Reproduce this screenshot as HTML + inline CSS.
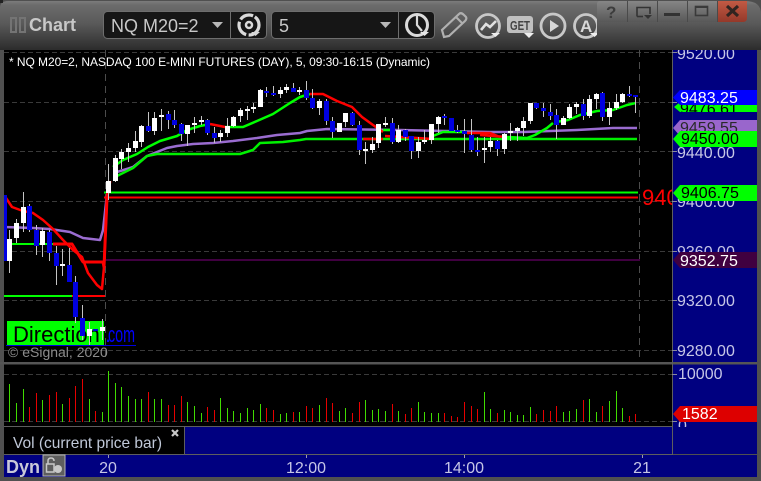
<!DOCTYPE html>
<html><head><meta charset="utf-8"><style>
html,body{margin:0;padding:0;background:#444;width:761px;height:481px;overflow:hidden}
svg{display:block}
text{font-family:"Liberation Sans",sans-serif}
.ax{font-size:16px;fill:#c6c6e6}
</style></head><body>
<svg width="761" height="481" viewBox="0 0 761 481" xmlns="http://www.w3.org/2000/svg">
<defs>
<linearGradient id="hd" x1="0" y1="0" x2="0" y2="1"><stop offset="0" stop-color="#7c7c7c"/><stop offset=".08" stop-color="#6c6c6c"/><stop offset=".45" stop-color="#5a5a5a"/><stop offset="1" stop-color="#2c2c2c"/></linearGradient>
<linearGradient id="bt" x1="0" y1="0" x2="0" y2="1"><stop offset="0" stop-color="#868686"/><stop offset="1" stop-color="#585858"/></linearGradient>
<linearGradient id="cl" x1="0" y1="0" x2="0" y2="1"><stop offset="0" stop-color="#c25a44"/><stop offset="1" stop-color="#94392a"/></linearGradient>
<clipPath id="tb"><rect x="0" y="0" width="597" height="50"/></clipPath>
<clipPath id="ch"><rect x="4" y="50" width="668" height="312"/></clipPath>
<clipPath id="redc"><rect x="640" y="180" width="32" height="40"/></clipPath>
<clipPath id="ra"><rect x="673" y="50" width="84" height="427"/></clipPath>
</defs>
<rect width="761" height="481" fill="#4e4e4e"/>
<path d="M0 481V8Q0 0 8 0H745Q761 0 761 14V481Z" fill="#505050"/>
<path d="M0 50V8Q0 1 8 1H745Q761 1 761 14V50Z" fill="url(#hd)"/>
<rect x="0" y="0" width="3" height="3" fill="#222"/>

<!-- title -->
<rect x="11" y="18" width="5" height="14" fill="none" stroke="#747474" stroke-width="2"/>
<rect x="20" y="18" width="5" height="14" fill="none" stroke="#747474" stroke-width="2"/>
<text x="29" y="31" font-size="18" font-weight="bold" fill="#c8c8c8">Chart</text>

<!-- pills -->
<rect x="103.500" y="11.500" width="163" height="27" rx="4" fill="#161616" stroke="#6e6e6e"/>
<path d="M230.500 12V38" stroke="#6e6e6e"/>
<text x="111" y="32" font-size="18" fill="#c8c8c8">NQ M20=2</text>
<path d="M212 22h11l-5.500 6z" fill="#b8b8b8"/>
<circle cx="249" cy="25" r="10" fill="none" stroke="#dadada" stroke-width="3.200" stroke-dasharray="16 2.500 16 2.500 14 2"/>
<circle cx="249" cy="25" r="3" fill="none" stroke="#dadada" stroke-width="2.500"/>
<path d="M251 32h9l-4.500 4z" fill="#d8d8d8"/>

<rect x="271.500" y="11.500" width="163" height="27" rx="4" fill="#161616" stroke="#6e6e6e"/>
<path d="M398.500 12V38" stroke="#6e6e6e"/>
<text x="279" y="32" font-size="18" fill="#c8c8c8">5</text>
<path d="M380 22h11l-5.500 6z" fill="#b8b8b8"/>
<circle cx="417" cy="25" r="10.500" fill="none" stroke="#dadada" stroke-width="3"/>
<path d="M417 16V25L422 31" fill="none" stroke="#dadada" stroke-width="2.200"/>
<path d="M420 32h9l-4.500 4z" fill="#e6e6e6"/>

<g clip-path="url(#tb)">
<!-- pencil -->
<path d="M444 37L442 30L459 14Q461 12 464 15L466 17Q467 19 465 21L449 36Z" fill="none" stroke="#b0b0b0" stroke-width="2.200"/>
<path d="M456 17L462 23" stroke="#b0b0b0" stroke-width="2"/>
<!-- line chart -->
<circle cx="488" cy="26" r="11.500" fill="none" stroke="#c8c8c8" stroke-width="2.800"/>
<path d="M481 30L486 24L490 27L496 21" fill="none" stroke="#e0e0e0" stroke-width="2.600"/>
<path d="M491 33h9l-4.500 4z" fill="#eee"/>
<!-- GET -->
<rect x="507" y="16" width="26" height="17" rx="3" fill="#c0c0c0"/>
<text x="510" y="30" font-size="13" font-weight="bold" fill="#444" textLength="20" lengthAdjust="spacingAndGlyphs">GET</text>
<path d="M524 33h10l-5 5z" fill="#eee"/>
<!-- play -->
<circle cx="553" cy="26" r="12" fill="none" stroke="#c8c8c8" stroke-width="2.800"/>
<path d="M550 20V32L559 26Z" fill="#d8d8d8"/>
<!-- A -->
<circle cx="586" cy="26" r="11.500" fill="none" stroke="#c8c8c8" stroke-width="2.800"/>
<text x="580" y="32" font-size="17" font-weight="bold" fill="#d8d8d8">A</text>
<path d="M590 33h9l-4.500 4z" fill="#eee"/>
</g>

<!-- window buttons -->
<path d="M597 4Q597 1 600 1H627V22H600Q597 22 597 19Z" fill="url(#bt)"/>
<rect x="627" y="1" width="30" height="21" fill="url(#bt)"/>
<rect x="657" y="1" width="30" height="21" fill="url(#bt)"/>
<rect x="687" y="1" width="30" height="21" fill="url(#bt)"/>
<path d="M717 1H747V18Q747 22 743 22H717Z" fill="url(#cl)"/>
<path d="M627.500 1V22M657.500 1V22M687.500 1V22M717.500 1V22" stroke="#4a4a4a"/>
<text x="606" y="18" font-size="17" font-weight="bold" fill="#3c3c3c">?</text>
<path d="M637 16.500V7.500H650V14" fill="none" stroke="#333" stroke-width="1.600"/><path d="M637 16.500H643" stroke="#333" stroke-width="1.600"/>
<path d="M644 15h8l-4 4z" fill="#333"/>
<rect x="664" y="13" width="16" height="3" fill="#333"/>
<rect x="695.500" y="6.500" width="12" height="9" fill="none" stroke="#3a3a3a" stroke-width="1.600"/><rect x="695" y="6" width="13" height="2" fill="#3a3a3a"/>
<path d="M727 6L738 16M738 6L727 16" stroke="#302420" stroke-width="3.200"/>

<!-- chart black area -->
<rect x="4" y="50" width="668" height="312" fill="#000"/>
<rect x="4" y="365" width="668" height="61" fill="#000"/>
<rect x="4" y="427" width="181" height="27" fill="#000"/>
<rect x="185" y="427" width="487" height="27" fill="#000080"/>
<rect x="4" y="455" width="753" height="22" fill="#000080"/>
<rect x="673" y="50" width="84" height="404" fill="#000080"/>
<rect x="4" y="362" width="668" height="3" fill="#000"/>
<rect x="0" y="362" width="757" height="2.500" fill="#555"/>
<path d="M672.500 50V454.500H4M4 426.500H672M184.500 427V454" stroke="#5e5e5e" fill="none"/>

<!-- grid -->
<path d="M4 52.500H678M4 102.500H672M4 151.500H672M4 201.500H672M4 251.500H672M4 300.500H672M4 350.500H672M4 374.500H672M4 421.500H672" stroke="#3a3a3a" stroke-dasharray="5 3" fill="none"/>
<path d="M105.500 50V362M639.500 50V362" stroke="#4c4c4c" stroke-dasharray="7 5" fill="none"/>
<path d="M672 52.500h5M672 102.500h5M672 151.500h5M672 201.500h5M672 251.500h5M672 300.500h5M672 350.500h5M672 374.500h5M672 421.500h5" stroke="#8a8a9a"/>

<text x="9" y="66" font-size="12" fill="#fff" textLength="421" lengthAdjust="spacing">* NQ M20=2, NASDAQ 100 E-MINI FUTURES (DAY), 5, 09:30-16:15 (Dynamic)</text>

<!-- Direction box -->
<rect x="7" y="321" width="97" height="24" fill="#00ff00"/>
<text x="13" y="342" font-size="22" fill="#000">Direction</text>
<text x="105" y="342" font-size="22" fill="#0000ff">.</text>
<text x="108" y="342" font-size="22" fill="#0000ff" textLength="27" lengthAdjust="spacingAndGlyphs">com</text>
<rect x="6" y="345" width="130" height="1" fill="#0000e0"/>
<text x="8" y="357" font-size="14" fill="#8c8c8c">© eSignal, 2020</text>

<g clip-path="url(#ch)" fill="none" stroke-linejoin="round">
<!-- horizontals -->
<path d="M104 192.500H638" stroke="#00ff00" stroke-width="2"/>
<path d="M104 197.500H638" stroke="#ff0000" stroke-width="2"/>
<path d="M104 260H640" stroke="#400040" stroke-width="2"/>
<path d="M4 296H72" stroke="#00ff00" stroke-width="2"/>
<path d="M72 296H105" stroke="#ff0000" stroke-width="2"/>
<path d="M6 244H53" stroke="#00ff00" stroke-width="2"/>
<!-- purple -->
<path d="M4 227L33 228L50 229L70 232L83 238L100 240L103 230L106 203L108 190M117 172L133 167L147 156L157 152L167 148L177 146L193 144L213 143L233 141L257 138L277 135L300 133L307 131L327 129L400 130L490 132L523 132L577 130L613 128L637 128" stroke="#9a6cd0" stroke-width="2.500"/>
<!-- slow green -->
<path d="M117 176L133 168L147 156L157 154L240 154L253 150L260 143L283 142L300 140L306 139L357 139L490 139L637 139" stroke="#00f000" stroke-width="2.500"/>
<!-- fast green -->
<path d="M113 167L123 160L137 154L148 147L160 141L177 136L187 130L200 126L210 124M225 127L233 127L243 127L257 121L273 114L290 103L300 97L310 94" stroke="#00ff00" stroke-width="2.500"/>
<path d="M383 130L390 130M433 136L443 132L467 132M507 137L527 138L535 135L547 128L553 123M556 122L568 120L580 115L597 111L613 110L627 105L636 103" stroke="#00ff00" stroke-width="2.500"/>
<!-- red -->
<path d="M6 198L12 207L23 211L33 213L43 220L53 229L63 240L73 250L82 257L88 273L97 285L102 289L104 267L107 198" stroke="#ff0000" stroke-width="2.500"/>
<path d="M53 244H72L83 262H103L104 267L107 198L110 181" stroke="#ff0000" stroke-width="3"/>
<path d="M210 124L225 127M310 94L323 94L337 101L352 107L362 117L373 125L383 132" stroke="#ff0000" stroke-width="2.500"/>
<path d="M363 139H383M385 136L417 138L433 139M467 133H490L500 137M480 135L507 137" stroke="#ff0000" stroke-width="2.500"/>
<!-- wicks -->
<path stroke="#c4c4c4" d="M9.500 230V273M16.500 219V243M23.500 192V232M29.500 204V232M36.500 225V255M42.500 228V257M49.500 230V261M56.500 246V285M62.500 249V276M69.500 248V282M75.500 276V323M82.500 305V340M89.500 322V345M102.500 319V340M108.500 164V200M115.500 155V182M121.500 149V169M128.500 143V162M135.500 131V152M141.500 125V147M148.500 112V132M154.500 112V135M161.500 109V131M168.500 111V129M174.500 110V128M181.500 123V141M187.500 125V146M194.500 117V133M201.500 116V125M207.500 119V135M214.500 127V143M220.500 130V142M227.500 118V137M233.500 116V127M240.500 108V122M247.500 106V120M253.500 103V113M260.500 89V107M266.500 87V97M273.500 86V96M280.500 87V98M286.500 84V93M293.500 83V92M299.500 87V95M306.500 81V100M312.500 89V109M319.500 99V115M326.500 99V125M332.500 117V138M339.500 123V132M345.500 113V127M352.500 112V126M359.500 121V155M365.500 142V164M372.500 137V153M378.500 124V148M385.500 117V127M392.500 118V144M398.500 125V143M405.500 129V141M411.500 136V159M418.500 137V158M424.500 130V144M431.500 124V144M438.500 116V133M444.500 114V125M451.500 118V131M457.500 125V133M464.500 119V153M471.500 119V152M477.500 137V156M484.500 137V163M490.500 137V152M497.500 140V156M504.500 133V154M510.500 123V141M517.500 127V141M523.500 117V136M530.500 103V124M536.500 103V109M543.500 103V117M550.500 104V120M556.500 109V139M563.500 116V125M569.500 104V119M576.500 102V114M583.500 99V120M589.500 95V118M596.500 93V109M602.500 92V121M609.500 102V125M616.500 94V110M622.500 93V103M629.500 86V97M635.500 95V113"/>
<!-- white bodies -->
<path stroke="#fff" stroke-width="5" d="M9.500 239V261M16.500 223V238M23.500 207V223M42.500 231V245M62.500 264V266M89.500 329V336M102.500 327V331M108.500 181V193M115.500 158V181M121.500 152V159M128.500 148V152M135.500 141V148M141.500 126V142M154.500 118V131M161.500 115V117M187.500 125V134M194.500 123V125M201.500 120V122M220.500 133V137M227.500 126V133M233.500 117V126M240.500 110V116M247.500 109V111M253.500 107V109M260.500 90V107M280.500 90V94M286.500 87V90M299.500 90V92M319.500 101V108M339.500 123V132M345.500 113V122M365.500 149V151M372.500 144V150M378.500 124V143M385.500 123V125M398.500 130V142M418.500 142V151M424.500 140V142M431.500 124V140M438.500 117V124M484.500 148V150M490.500 141V147M504.500 134V149M510.500 131V133M517.500 128V131M523.500 121V128M530.500 103V121M563.500 118V125M569.500 107V118M576.500 104V107M589.500 99V116M596.500 94V99M609.500 108V117M616.500 102V108M622.500 94V102"/>
<!-- blue bodies -->
<path stroke="#0000e0" stroke-width="5" d="M29.500 206V230M36.500 230V246M49.500 232V253M56.500 253V266M69.500 265V282M75.500 282V317M82.500 318V336M95.500 329V331M148.500 126V131M168.500 114V120M174.500 120V125M181.500 124V134M207.500 120V133M214.500 133V138M266.500 91V93M273.500 93V95M293.500 88V92M306.500 90V98M312.500 98V108M326.500 101V121M332.500 121V132M352.500 113V125M359.500 125V150M392.500 123V142M405.500 130V137M411.500 136V151M444.500 116V118M451.500 118V131M457.500 130V132M464.500 131V134M471.500 135V150M477.500 150V152M497.500 141V149M536.500 103V108M543.500 108V111M550.500 112V116M556.500 115V125M583.500 104V116M602.500 93V117M629.500 94V96M635.500 95V97"/>
</g>
<path d="M4 195H7V261H4Z" fill="#0000e0"/>

<!-- volume -->
<path stroke="#40dc00" d="M9.500 384V422M16.500 403V422M23.500 389V422M42.500 400V422M62.500 404V422M89.500 399V422M102.500 412V422M108.500 371V422M115.500 383V422M121.500 387V422M128.500 396V422M135.500 399V422M141.500 399V422M154.500 399V422M161.500 399V422M187.500 402V422M194.500 406V422M201.500 413V422M220.500 398V422M227.500 408V422M233.500 411V422M240.500 413V422M247.500 408V422M253.500 410V422M260.500 404V422M280.500 414V422M286.500 413V422M299.500 412V422M319.500 405V422M339.500 411V422M345.500 408V422M365.500 400V422M372.500 410V422M378.500 409V422M385.500 411V422M398.500 411V422M418.500 402V422M424.500 412V422M431.500 413V422M438.500 413V422M484.500 392V422M490.500 409V422M504.500 410V422M510.500 412V422M517.500 415V422M523.500 415V422M530.500 407V422M563.500 412V422M569.500 411V422M576.500 409V422M589.500 399V422M596.500 412V422M609.500 401V422M616.500 391V422M622.500 408V422"/>
<path stroke="#e60000" d="M29.500 407V422M36.500 393V422M49.500 395V422M56.500 392V422M69.500 398V422M75.500 386V422M82.500 379V422M95.500 411V422M148.500 392V422M168.500 405V422M174.500 405V422M181.500 396V422M207.500 407V422M214.500 410V422M266.500 408V422M273.500 410V422M293.500 412V422M306.500 406V422M312.500 408V422M326.500 398V422M332.500 403V422M352.500 413V422M359.500 402V422M392.500 404V422M405.500 414V422M411.500 408V422M444.500 413V422M451.500 416V422M457.500 417V422M464.500 402V422M471.500 406V422M477.500 409V422M497.500 413V422M536.500 414V422M543.500 410V422M550.500 411V422M556.500 406V422M583.500 400V422M602.500 406V422M629.500 416V422M635.500 414V422"/>

<text x="13" y="448" font-size="16" fill="#c0c8d8" textLength="149" lengthAdjust="spacingAndGlyphs">Vol (current price bar)</text>
<path d="M172 430L178 436M178 430L172 436" stroke="#c8c8c8" stroke-width="2.200"/>

<!-- red text -->
<text x="642" y="205" font-size="22" fill="#ff0000" clip-path="url(#redc)">9406.75</text>

<!-- axis -->
<g clip-path="url(#ra)">
<text x="677" y="59" class="ax">9520.00</text>
<text x="677" y="158" class="ax">9440.00</text>
<text x="677" y="207" class="ax">9400.00</text>
<text x="677" y="257" class="ax">9360.00</text>
<text x="677" y="306" class="ax">9320.00</text>
<text x="677" y="356" class="ax">9280.00</text>
<text x="678" y="379" class="ax">10000</text>
<text x="678" y="431" class="ax">0</text>
<rect x="673" y="427" width="84" height="27" fill="#000080"/>
</g>
<path d="M680 102H757V112H680L674 107Z" fill="#00ff00"/>
<text x="680" y="114" font-size="16" fill="#000">9476.61</text>
<rect x="673" y="112" width="84" height="8" fill="#000080"/>
<path d="M680 90H757V105H680L673 97.500Z" fill="#0000ff"/>
<text x="680" y="103" font-size="16" fill="#fff">9483.25</text>
<path d="M680 120H757V136H680L673 128Z" fill="#9966cc"/>
<text x="680" y="133" font-size="16" fill="#2a2a2a">9459.55</text>
<path d="M680 131H757V147H680L673 139Z" fill="#00ff00"/>
<text x="681" y="144" font-size="16" fill="#000">9450.00</text>
<path d="M680 185H757V201H680L673 193Z" fill="#00ff00"/>
<text x="681" y="198" font-size="16" fill="#000">9406.75</text>
<path d="M680 252H757V268H680L673 260Z" fill="#400040"/>
<text x="680" y="266" font-size="16" fill="#fff">9352.75</text>
<path d="M680 406H757V422H680L673 414Z" fill="#dd0000"/>
<text x="682" y="419" font-size="16" fill="#fff">1582</text>

<!-- bottom axis -->
<text x="6" y="473" font-size="18" font-weight="bold" fill="#c8c8d8">Dyn</text>
<rect x="43" y="455" width="22" height="21" fill="#5e5e5e" stroke="#b4b4b4"/>
<path d="M46.500 472V464H54V472ZM48 464V461Q48 458 51 458Q54 458 54 461" fill="none" stroke="#c8c8c8" stroke-width="1.500"/>
<circle cx="58" cy="469" r="4" fill="#c8c8c8"/>
<path d="M108.500 455V458M306.500 455V458M464.500 455V458M642.500 455V458" stroke="#9a9ab0"/>
<text x="108" y="473" class="ax" text-anchor="middle">20</text>
<text x="306" y="473" class="ax" text-anchor="middle">12:00</text>
<text x="464" y="473" class="ax" text-anchor="middle">14:00</text>
<text x="642" y="473" class="ax" text-anchor="middle">21</text>
</svg>
</body></html>
